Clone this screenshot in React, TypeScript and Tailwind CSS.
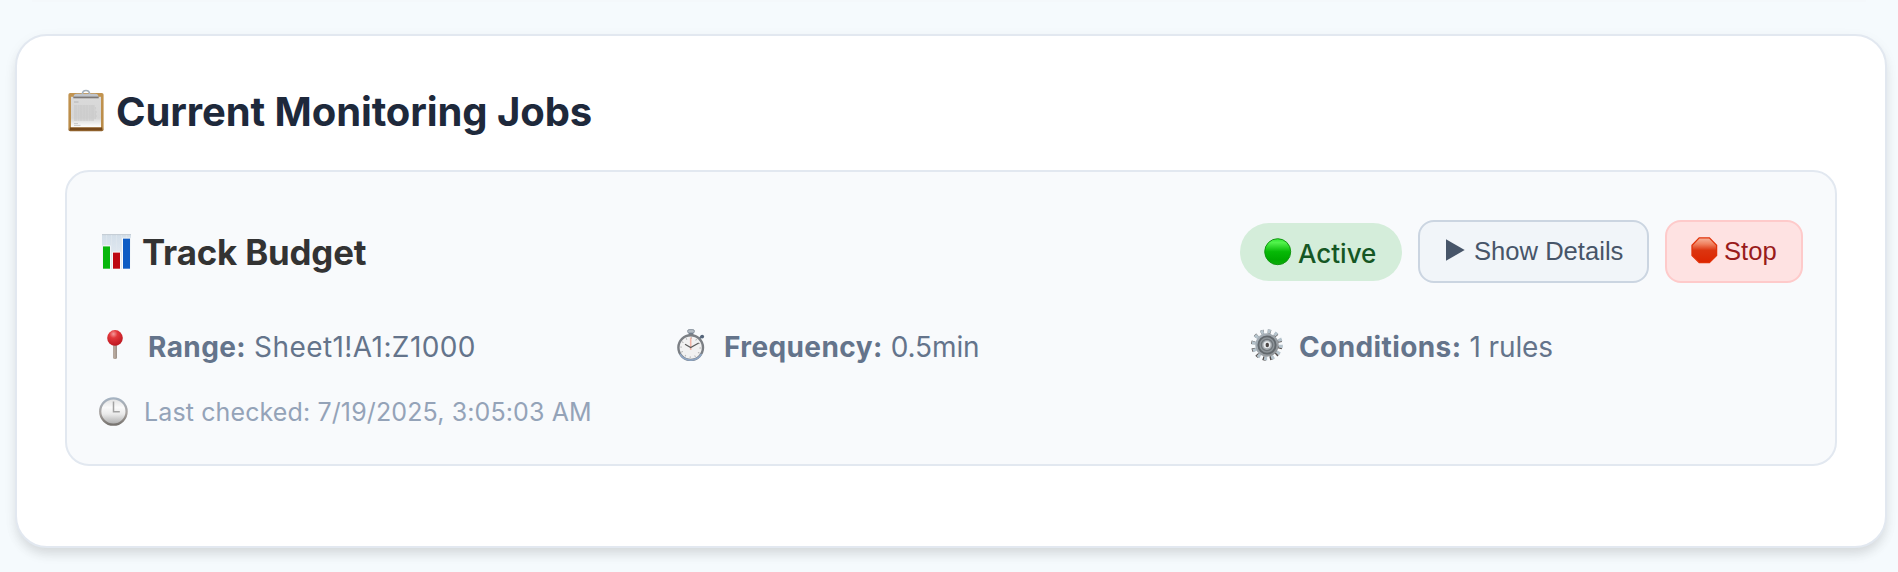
import type { ReactNode } from "react";

function ClipboardIcon() {
  return (
    <svg className="shrink-0" width="36" height="43" viewBox="0 0 36 43">
      <defs>
        <linearGradient id="clipPaper" x1="0" y1="0" x2="0" y2="1">
          <stop offset="0" stopColor="#dadada" />
          <stop offset="0.7" stopColor="#d6d6d6" />
          <stop offset="1" stopColor="#ffffff" />
        </linearGradient>
        <linearGradient id="clipWood" x1="0" y1="0" x2="0" y2="1">
          <stop offset="0" stopColor="#c29450" />
          <stop offset="0.9" stopColor="#b98b48" />
          <stop offset="1" stopColor="#8e602b" />
        </linearGradient>
      </defs>
      <rect x="0.4" y="4" width="35.2" height="38.2" rx="1.8" fill="url(#clipWood)" />
      <rect x="2" y="38.4" width="32" height="2.8" fill="#76491c" />
      <rect x="3" y="7.8" width="30" height="30.4" fill="url(#clipPaper)" />
      <path d="M14.3 5.2c.2-2.2 1.7-3.7 3.7-3.7s3.500 1.500 3.700 3.700" fill="none" stroke="#a3afba" strokeWidth="1.600" />
      <path d="M5.500 8.500c0-2.800 1-3.700 3.500-3.700h18c2.500 0 3.500.900 3.500 3.700z" fill="#bfc3c9" />
      <rect x="5.300" y="7.600" width="25.400" height="1.700" fill="#7d7876" />
      <path d="M6 13h4.500" stroke="#b4b4b4" strokeWidth="1" />
      <path d="M6 17h21M6 19h22M6 21h21.500M6 23h23M6 25h22M6 27h23M6 29h22M6 31h20" stroke="#c4c4c4" strokeWidth="1.100" strokeDasharray="3 .4 2 .3" />
      <path d="M6 34.600h4M6 36.400h6.500" stroke="#c4c4c4" strokeWidth=".9" />
    </svg>
  );
}

function ChartIcon() {
  return (
    <svg className="shrink-0" width="29" height="35" viewBox="0 0 29 35">
      <defs>
        <linearGradient id="chartBack" x1="0" y1="0" x2="0" y2="1">
          <stop offset="0" stopColor="#d3dee9" />
          <stop offset="1" stopColor="#e9eff5" />
        </linearGradient>
      </defs>
      <rect width="29" height="35" fill="url(#chartBack)" />
      <path d="M0 .6h29" stroke="#c6ced6" strokeWidth="1.200" />
      <path d="M4.500 1v34M9.500 1v34M14.500 1v34M19.500 1v34M24.500 1v34" stroke="#dfe7ee" strokeWidth=".7" />
      <path d="M.4 11.600h8.200V35H.4zM10.400 17.800h8.200V35h-8.200zM20.200 3.800h8.400V35h-8.400z" fill="#fff" />
      <rect x="1" y="12.400" width="7" height="22.300" fill="#08b70c" />
      <rect x="11" y="18.600" width="7" height="16.100" fill="#bd0712" />
      <rect x="21" y="4.600" width="7" height="30.100" fill="#0d5bc4" />
    </svg>
  );
}

function GreenDot() {
  return (
    <svg className="shrink-0" width="28" height="28" viewBox="0 0 28 28">
      <defs>
        <linearGradient id="dotFill" x1="0" y1="0" x2="0" y2="1">
          <stop offset="0" stopColor="#2fe82f" />
          <stop offset="0.15" stopColor="#52f34c" />
          <stop offset="0.5" stopColor="#06b906" />
          <stop offset="0.8" stopColor="#00a900" />
          <stop offset="1" stopColor="#0cae0a" />
        </linearGradient>
      </defs>
      <circle cx="13.700" cy="13.700" r="13" fill="url(#dotFill)" stroke="#119611" strokeWidth="1" />
    </svg>
  );
}

function StopSign() {
  return (
    <svg className="shrink-0" width="27" height="27" viewBox="0 0 27 27">
      <defs>
        <linearGradient id="stopFill" x1="0" y1="0" x2="0" y2="1">
          <stop offset="0" stopColor="#f6b49d" />
          <stop offset="0.25" stopColor="#f0805e" />
          <stop offset="0.5" stopColor="#dc3510" />
          <stop offset="1" stopColor="#dc2400" />
        </linearGradient>
      </defs>
      <path d="M8.200.9h10.200l7.200 7.300v10.200l-7.200 7.200H8.200L1 18.400V8.200z" fill="url(#stopFill)" stroke="#e13209" strokeWidth="1.300" />
    </svg>
  );
}

function PinIcon() {
  return (
    <svg className="shrink-0" width="16" height="30" viewBox="0 0 16 30">
      <defs>
        <radialGradient id="pinHead" cx=".4" cy=".25" r=".75">
          <stop offset="0" stopColor="#f59a9a" />
          <stop offset="0.35" stopColor="#e2373b" />
          <stop offset="1" stopColor="#bd1720" />
        </radialGradient>
        <linearGradient id="pinNeedle">
          <stop offset="0" stopColor="#8f7a6c" />
          <stop offset="0.5" stopColor="#c8bcb2" />
          <stop offset="1" stopColor="#6e5c50" />
        </linearGradient>
      </defs>
      <path d="M6.300 14h3.400v14.200q-1.700 1.700-3.400 0z" fill="url(#pinNeedle)" />
      <circle cx="8" cy="7.900" r="7.800" fill="url(#pinHead)" />
    </svg>
  );
}

function StopwatchIcon() {
  return (
    <svg className="shrink-0" width="28" height="33" viewBox="0 0 28 33">
      <rect x="11.700" y="3" width="4.600" height="4" fill="#6c7987" />
      <rect x="10.600" y=".6" width="6.800" height="3.400" rx="1.500" fill="#b4bcc4" stroke="#7c8894" strokeWidth=".8" />
      <path d="M22.500 9.500l2.500-2.500" stroke="#66768a" strokeWidth="2" />
      <circle cx="25.200" cy="7.600" r="1.900" fill="#55657a" />
      <circle cx="13.700" cy="18.600" r="12.300" fill="#f1f1f1" stroke="#7b7f84" strokeWidth="2.400" />
      <path d="M3 25a12.500 12.500 0 0 0 21.500 0" fill="none" stroke="#8fa6c4" strokeWidth="1.600" />
      <circle cx="13.700" cy="18.600" r="9.600" fill="none" stroke="#b3b3b3" strokeWidth="1.800" strokeDasharray=".9 4.127" />
      <path d="M13.700 8.400v12.500" stroke="#f0b5a8" strokeWidth="1.600" />
      <path d="M8 15.300l5.700 3.300 8-4.700" fill="none" stroke="#5c5c5c" strokeWidth="1.200" />
    </svg>
  );
}

function GearIcon() {
  return (
    <svg className="shrink-0" width="32" height="32" viewBox="0 0 32 32">
      <defs>
        <linearGradient id="gearFill" x1="0" y1="0" x2="1" y2="1">
          <stop offset="0" stopColor="#a9b4bd" />
          <stop offset="1" stopColor="#8c8f92" />
        </linearGradient>
      </defs>
      <circle cx="15.700" cy="16.100" r="13.600" fill="none" stroke="#554e4c" strokeWidth="4" strokeDasharray="3.100 4.020" transform="rotate(3 15.800 16)" />
      <circle cx="16.300" cy="15.800" r="13.600" fill="none" stroke="#b5c3cc" strokeWidth="4" strokeDasharray="3.100 4.020" />
      <circle cx="16" cy="16" r="11.700" fill="url(#gearFill)" />
      <circle cx="16" cy="16" r="8.600" fill="#8d9499" stroke="#62686d" strokeWidth="1.900" />
      <circle cx="16" cy="16" r="5.600" fill="#a5abb0" stroke="#70767b" strokeWidth="1.300" />
      <circle cx="16" cy="15.800" r="3.500" fill="#e6eaed" />
      <ellipse cx="16.300" cy="16" rx="1.700" ry="2.200" fill="#4b4545" />
    </svg>
  );
}

function ClockIcon() {
  return (
    <svg className="shrink-0" width="29" height="30" viewBox="0 0 29 30">
      <defs>
        <linearGradient id="clockRim" x1="0" y1="0" x2="0" y2="1">
          <stop offset="0" stopColor="#a5b3c2" />
          <stop offset="0.55" stopColor="#aaa5a2" />
          <stop offset="1" stopColor="#77736f" />
        </linearGradient>
        <linearGradient id="clockFace" x1="0" y1="0" x2="0" y2="1">
          <stop offset="0" stopColor="#e0e0e0" />
          <stop offset="0.35" stopColor="#fafafa" />
          <stop offset="0.6" stopColor="#eaeaea" />
          <stop offset="1" stopColor="#a8a8a8" />
        </linearGradient>
      </defs>
      <circle cx="14.400" cy="14.500" r="13.200" fill="url(#clockFace)" stroke="url(#clockRim)" strokeWidth="2.300" />
      <path d="M14.500 4.500v10.300h6.300" fill="none" stroke="#a2a2a2" strokeWidth="1.500" />
    </svg>
  );
}

function Detail({ icon, label, value }: { icon: ReactNode; label: string; value: string }) {
  return (
    <div className="flex h-[46px] items-center text-[28px] text-[#64748b]">
      {icon}
      <span className="mr-[8px] font-bold tracking-[0.4px]">{label}</span>
      <span className={value.length > 8 ? "tracking-[0.42px]" : "tracking-[-0.1px]"}>{value}</span>
    </div>
  );
}

export default function App() {
  return (
    <div className="h-[572px] overflow-hidden bg-[#f5fafd] font-['Inter',sans-serif] whitespace-nowrap">
      <div className="mx-8 h-[2px] bg-[#f4f8fb]" />
      <section className="mt-8 mr-[11px] ml-[15px] h-[514px] rounded-[32px] border-2 border-[#e2e8f0] bg-white px-12 pt-12 shadow-[0_8px_12px_-2px_rgba(0,0,0,0.1),0_4px_16px_-2px_rgba(0,0,0,0.06)]">
        <h2 className="flex h-14 items-center text-[40px] font-bold text-[#1e293b]">
          <span className="mr-[12px] ml-[3px] flex pb-[3px]">
            <ClipboardIcon />
          </span>
          <span className="tracking-[-0.09px]">Current Monitoring Jobs</span>
        </h2>
        <article className="mt-[30px] h-[296px] rounded-3xl border-2 border-[#e2e8f0] bg-[#f8fafc] px-8 pt-12">
          <div className="flex h-[63px] items-center justify-between">
            <h3 className="flex items-center text-[34.8px] font-bold text-[#333333]">
              <span className="mr-[11px] ml-[3px] flex">
                <ChartIcon />
              </span>
              <span className="relative top-[1px] tracking-[-0.15px]">Track Budget</span>
            </h3>
            <div className="flex items-center gap-4">
              <span className="relative top-[0.5px] flex h-[58px] w-[162px] items-center rounded-full bg-[#d4edda] pl-6 text-[26px] font-medium text-[#155724]">
                <GreenDot />
                <span className="relative top-[1px] ml-[6px]">Active</span>
              </span>
              <button className="flex h-[63px] w-[231px] items-center rounded-2xl border-2 border-[#cbd5e1] bg-[#f1f5f9] pl-[26px] font-['Liberation_Sans',sans-serif] text-[25.6px] text-[#475569]">
                <svg className="mr-[9px] mb-[3px] shrink-0" width="19" height="22" viewBox="0 0 19 22">
                  <path d="M0 0.200L18.700 11 0 21.800z" fill="#475569" />
                </svg>
                Show Details
              </button>
              <button className="flex h-[63px] w-[138px] items-center rounded-2xl border-2 border-[#fecaca] bg-[#fee2e2] pl-6 font-['Liberation_Sans',sans-serif] text-[25.6px] text-[#991b1b]">
                <span className="mr-[6px] flex pb-[2px]">
                  <StopSign />
                </span>
                Stop
              </button>
            </div>
          </div>
          <div className="mt-[41px] grid grid-cols-3 gap-6">
            <Detail icon={<span className="flex w-[49px] pb-[4px] pl-[8px]"><PinIcon /></span>} label="Range:" value="Sheet1!A1:Z1000" />
            <Detail icon={<span className="flex w-[49px] pb-[4px] pl-[2px]"><StopwatchIcon /></span>} label="Frequency:" value="0.5min" />
            <Detail icon={<span className="flex w-[48px] pb-[4px]"><GearIcon /></span>} label="Conditions:" value="1 rules" />
          </div>
          <div className="mt-[22px] flex h-10 items-center text-[25px] tracking-[0.12px] text-[#94a3b8]">
            <span className="mr-[16px] flex">
              <ClockIcon />
            </span>
            <span className="pt-[2px]">Last checked: 7/19/2025, 3:05:03 AM</span>
          </div>
        </article>
      </section>
    </div>
  );
}
